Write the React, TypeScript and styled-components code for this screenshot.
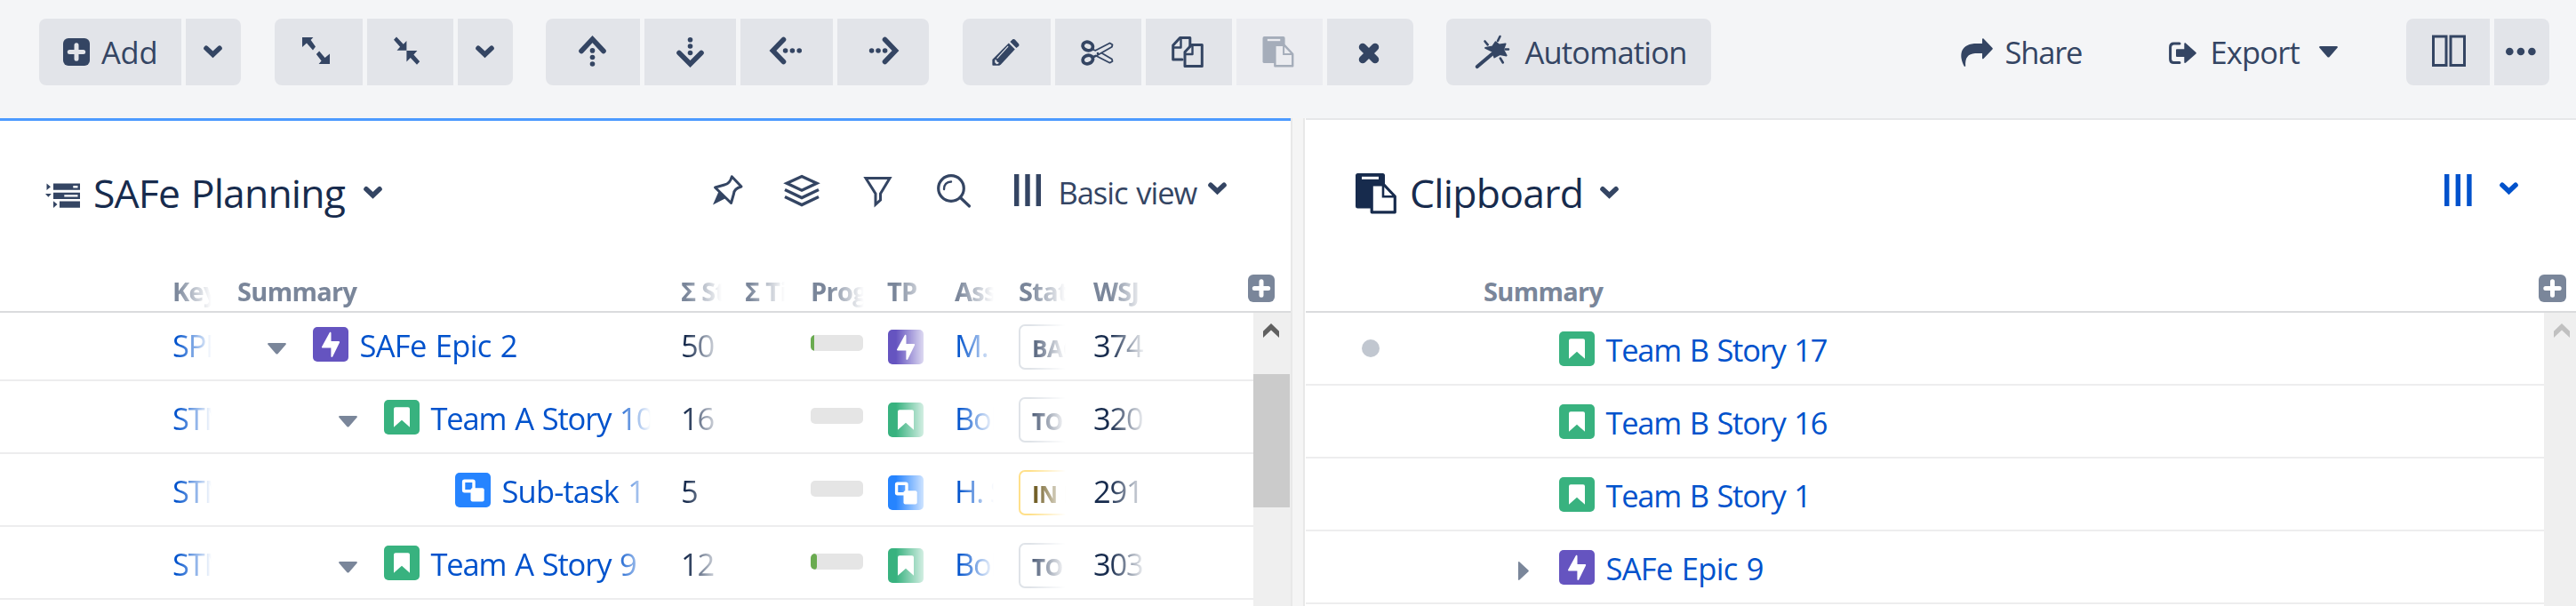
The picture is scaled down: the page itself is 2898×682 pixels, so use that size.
import React from 'react';
import styled, { createGlobalStyle, css } from 'styled-components';

const navy = '#344563';
const ink = '#172b4d';
const link = '#0052cc';
const muted = '#7a869a';

const GlobalStyle = createGlobalStyle`
  * { box-sizing: border-box; }
  body {
    margin: 0;
    background: #f4f5f7;
    font-family: "Open Sans", "Noto Sans", sans-serif;
    font-size: 34.5px;
    color: ${ink};
  }
`;

/* ---------- layout ---------- */

const Page = styled.div`
  display: flex;
  flex-direction: column;
  width: 2898px;
  height: 682px;
  overflow: hidden;
`;

const Toolbar = styled.header`
  display: flex;
  flex: none;
  height: 133px;
  padding: 21px 30px 0 44px;
  color: ${navy};
`;

const Group = styled.div<{ $after?: number }>`
  display: flex;
  gap: 5px;
  height: 75px;
  margin-right: ${p => p.$after ?? 38}px;
  border-radius: 8px;
  overflow: hidden;
`;

const Spacer = styled.div`
  flex: 1;
`;

const Button = styled.button<{ $w: number; $pad?: number; $plain?: boolean }>`
  display: flex;
  align-items: center;
  flex: none;
  width: ${p => p.$w}px;
  height: 75px;
  padding: 0 0 0 ${p => p.$pad ?? 0}px;
  border: 0;
  background: ${p => (p.$plain ? 'transparent' : '#e2e4e9')};
  color: inherit;
  font: inherit;
  &:disabled {
    background: #ebecf0;
    color: #a5adba;
  }
`;

const Label = styled.span<{ $track?: number; $left?: number; $w?: number }>`
  flex: none;
  margin-left: ${p => p.$left ?? 13}px;
  ${p => p.$w && css`width: ${p.$w}px;`}
  letter-spacing: ${p => p.$track ?? -1.05}px;
  word-spacing: 2px;
  line-height: 46px;
  text-align: left;
  white-space: pre;
`;

const ToolItem = styled.span<{ $left: number }>`
  display: flex;
  flex: none;
  margin-left: ${p => p.$left}px;
`;

const Panels = styled.main`
  display: flex;
  flex: 1;
  min-height: 0;
`;

const Panel = styled.section<{ $active?: boolean }>`
  display: flex;
  flex-direction: column;
  flex: none;
  width: ${p => (p.$active ? 1452 : 1429)}px;
  background: #fff;
  border-top: ${p => (p.$active ? '3px solid #4c9aff' : '2px solid #e6e7e9')};
  padding-top: ${p => (p.$active ? 0 : 1)}px;
`;

const Divider = styled.div`
  flex: none;
  width: 17px;
  background: #f5f5f5;
  border-left: 2px solid #e8e8e8;
  border-right: 1px solid #fff;
  box-shadow: inset -2px 0 0 #e8e8e8;
`;

const PanelHead = styled.div`
  display: flex;
  align-items: center;
  flex: none;
  height: 161px;
  padding-left: 51px;
  color: ${navy};
`;

const Title = styled.h1<{ $w: number; $track: number; $left: number }>`
  flex: none;
  width: ${p => p.$w}px;
  margin: 0 0 0 ${p => p.$left}px;
  color: ${ink};
  font-size: 44.5px;
  font-weight: 400;
  line-height: 60px;
  letter-spacing: ${p => p.$track}px;
  word-spacing: 2px;
  white-space: nowrap;
`;

const Tools = styled.div<{ $right: number; $accent?: boolean }>`
  display: flex;
  align-items: center;
  margin-left: auto;
  margin-right: ${p => p.$right}px;
  color: ${p => (p.$accent ? link : navy)};
`;

const columns = css`
  display: grid;
  grid-template-columns: 73px 499px 72px 74px 86px 76px 72px 84px 1fr;
  padding-left: 194px;
`;

const HeadRow = styled.div<{ $grid?: boolean }>`
  flex: none;
  height: 55px;
  padding-top: 8px;
  border-bottom: 2px solid #dadbdd;
  color: ${muted};
  font-size: 29px;
  font-weight: 700;
  letter-spacing: -0.7px;
  line-height: 45px;
  ${p => (p.$grid ? columns : css`display: flex; padding-left: 200px;`)}
`;

const LastHead = styled.div`
  display: flex;
  flex: 1;
  justify-content: space-between;
`;

const AddColumn = styled.span<{ $right: number }>`
  display: flex;
  height: 31px;
  margin: 4px ${p => p.$right}px 0 0;
`;

const Body = styled.div`
  display: flex;
  flex: 1;
  min-height: 0;
`;

const Rows = styled.div<{ $scrolled?: boolean }>`
  flex: 1;
  overflow: hidden;
  > :first-child {
    margin-top: ${p => (p.$scrolled ? -5 : 0)}px;
  }
`;

const rowBox = css`
  height: 82px;
  border-bottom: 2px solid #ededee;
`;

const GridRow = styled.div`
  ${rowBox}
  ${columns}
`;

const ClipRow = styled.div`
  ${rowBox}
  display: flex;
`;

const Cell = styled.div<{ $w: number; $top?: number; $link?: boolean }>`
  width: ${p => p.$w}px;
  padding-top: ${p => p.$top ?? 0}px;
  overflow: hidden;
  white-space: nowrap;
  color: ${p => (p.$link ? link : 'inherit')};
  mask-image: linear-gradient(to right, #000 calc(100% - 42px), transparent calc(100% - 2px));
`;

const Value = styled.span`
  display: block;
  letter-spacing: -1.2px;
  line-height: 83px;
`;

const Meter = styled.div`
  width: 59px;
  height: 18px;
  margin-top: 30px;
  border-radius: 5px;
  background: #e5e5e5;
  overflow: hidden;
`;

const MeterFill = styled.div<{ $w: number }>`
  width: ${p => p.$w}px;
  height: 100%;
  border-radius: ${p => (p.$w > 5 ? 4 : 0)}px;
  background: #6aab50;
`;

const Status = styled.div<{ $active?: boolean }>`
  width: 200px;
  height: 51px;
  padding-left: 13px;
  border: 2px solid ${p => (p.$active ? '#ffe08a' : '#dfe3e8')};
  border-radius: 7px;
  color: ${p => (p.$active ? '#594300' : '#42526e')};
  font-size: 26px;
  font-weight: 700;
  letter-spacing: -0.5px;
  line-height: 50px;
`;

const Issue = styled.div<{ $indent: number }>`
  display: flex;
  align-items: flex-start;
  margin-left: ${p => p.$indent}px;
  color: ${link};
`;

const ToggleSlot = styled.span<{ $top: number }>`
  display: flex;
  justify-content: center;
  width: 21px;
  margin: ${p => p.$top}px 30px 0 0;
  color: ${muted};
`;

const IconSlot = styled.span`
  display: flex;
  margin-top: 21px;
`;

const IssueText = styled.a<{ $track: number }>`
  margin-left: 12.5px;
  line-height: 83px;
  letter-spacing: ${p => p.$track}px;
  word-spacing: 2px;
  white-space: nowrap;
`;

const TypeSlot = styled.span`
  display: flex;
  padding-left: 1px;
`;

const ClipSlot = styled.span`
  display: flex;
  margin: 3px 0 0 5px;
  color: ${ink};
`;

const DotSlot = styled.span`
  width: 234px;
  padding: 30px 0 0 62.5px;
`;

const Dot = styled.span`
  display: block;
  width: 20px;
  height: 20px;
  border-radius: 50%;
  background: #c1c7d0;
`;

const Scrollbar = styled.div<{ $w: number; $dim?: boolean }>`
  flex: none;
  display: flex;
  flex-direction: column;
  width: ${p => p.$w}px;
  padding: 12px 0 0 11px;
  background: #efefef;
  color: ${p => (p.$dim ? '#c0c0c0' : '#606060')};
`;

const Thumb = styled.div`
  width: 41px;
  height: 150px;
  margin: 41px 0 0 -11px;
  background: #cbcbcb;
`;

/* ---------- icons ---------- */

const Svg = styled.svg`
  display: block;
  flex: none;
  overflow: visible;
`;

const Icon = ({ w, h = 45, children }: { w: number; h?: number; children: React.ReactNode }) => (
  <Svg width={w} height={h} viewBox={`0 0 ${w} ${h}`} fill="currentColor" strokeLinecap="round">
    {children}
  </Svg>
);

const Chevron = ({ y, h = 45 }: { y: number; h?: number }) => (
  <Icon w={21} h={h}>
    <path d={`M3 ${y + 2.8}l7.5 7 7.5-7`} fill="none" stroke="currentColor" strokeWidth="5.6" strokeLinejoin="miter" />
  </Icon>
);

const Plus = ({ cross, w = 31 }: { cross: string; w?: number }) => (
  <Svg width={w} height="31" viewBox={`0 0 ${w} 31`} fill="none">
    <rect width={w} height="31" rx="6" fill="currentColor" />
    <path d={`M${w / 2} 7.8v15.4M${w / 2 - 7.7} 15.5h15.4`} stroke={cross} strokeWidth="5" strokeLinecap="round" />
  </Svg>
);

const Expand = () => (
  <Icon w={31}>
    <path d="M0 6h12.4L9.600 9l5.400 7.500-3 4L5 12.500 0 17z" />
    <path d="M31 36H18.600l3-3.500-5.800-7.500 3.400-3.500 6.300 7.500L31 24.500z" />
  </Icon>
);

const Collapse = () => (
  <Icon w={30}>
    <path d="M14.400 20.700H3.500l3.600-4L0 8.800l3-3.200 7.800 8.200L14.400 10z" />
    <path d="M14.400 21h12l-4 4.600 6.800 7.600-3.200 3.600-7.200-7.800-4.400 4.500z" />
  </Icon>
);

const Up = () => (
  <Icon w={31}>
    <path d="M3 21.5L15.5 8 28 21.5" fill="none" stroke="currentColor" strokeWidth="5.6" />
    <circle cx="15.5" cy="20.9" r="2.8" /><circle cx="15.5" cy="28.5" r="2.8" /><circle cx="15.5" cy="36" r="2.8" />
  </Icon>
);

const Down = () => (
  <Icon w={31}>
    <path d="M3 23.5L15.5 36 28 23.5" fill="none" stroke="currentColor" strokeWidth="5.6" />
    <circle cx="15.5" cy="8.7" r="2.8" /><circle cx="15.5" cy="16" r="2.8" /><circle cx="15.5" cy="23.5" r="2.8" />
  </Icon>
);

const Left = () => (
  <Icon w={36}>
    <path d="M15.5 8.5L3.4 21l12.1 12.5" fill="none" stroke="currentColor" strokeWidth="5.6" />
    <circle cx="17.6" cy="21" r="2.8" /><circle cx="25.4" cy="21" r="2.8" /><circle cx="33.2" cy="21" r="2.8" />
  </Icon>
);

const Right = () => (
  <Icon w={34}>
    <path d="M17.5 8.5L29.5 21 17.5 33.5" fill="none" stroke="currentColor" strokeWidth="5.6" />
    <circle cx="2.6" cy="21" r="2.8" /><circle cx="10" cy="21" r="2.8" /><circle cx="17.6" cy="21" r="2.8" />
  </Icon>
);

const Pencil = () => (
  <Icon w={31}>
    <path d="M18.8 12.6l7 7-16 17.2-1.600.9H.8L.4 37V31z" />
    <path d="M20.4 11L23 8.6c1-.8 2-.6 2.8 0l4 4.400c.9 1 .9 2 .2 3L27.4 18z" />
    <path d="M17.8 16.4L6 29.4" stroke="#e2e4e9" strokeWidth="1.2" />
    <path d="M3.400 31l1.600.4.6 2 2 .8-.2 1.400-2.200.6-2-2z" fill="#e2e4e9" />
  </Icon>
);

const Scissors = () => (
  <Icon w={37}>
    <g fill="none" stroke="currentColor">
      <ellipse cx="7.8" cy="16" rx="5.8" ry="4.6" strokeWidth="3.8" transform="rotate(22 7.8 16)" />
      <ellipse cx="7.8" cy="31" rx="5.8" ry="4.6" strokeWidth="3.8" transform="rotate(-22 7.8 31)" />
      <path d="M14 20l2.500.8L32.500 12.500l3 1.700-.6 2.500L14.500 28.500" strokeWidth="1.8" strokeLinejoin="round" />
      <path d="M14 27.500l2.500-1 16 8.200 3-1.700-.6-2.500-11-6.500" strokeWidth="1.8" strokeLinejoin="round" />
    </g>
    <circle cx="19" cy="24" r="1.3" />
  </Icon>
);

const Copy = () => (
  <Icon w={36}>
    <g fill="none" stroke="currentColor" strokeWidth="3" strokeLinejoin="round">
      <path d="M12 31H1.700V15L9.500 6.500h11.300V16" />
      <path d="M3 17.500h7.500V8" strokeWidth="2.4" />
      <path d="M15 22.500l7.500-8h11.800V38.500H15z" />
      <path d="M16 25h7.500V16" strokeWidth="2.4" />
    </g>
  </Icon>
);

const Paste = ({ w, h, paper }: { w: number; h: number; paper: string }) => (
  <Svg width={w} height={h} viewBox="0 0 46 46">
    <rect width="33" height="39.5" rx="2.5" fill="currentColor" />
    <rect x="7" y="3.8" width="19" height="3" fill={paper} />
    <path d="M18.200 13H32l12.300 13v17.800H18.200z" fill={paper} stroke="currentColor" strokeWidth="3.2" strokeLinejoin="round" />
    <path d="M31 13v13.200h14" fill="none" stroke="currentColor" strokeWidth="2.6" />
  </Svg>
);

const Cross = () => (
  <Icon w={24}>
    <path d="M5 17l14 14M19 17L5 31" stroke="currentColor" strokeWidth="8.5" />
  </Icon>
);

const Wand = () => (
  <Icon w={38}>
    <path d="M1.800 39L19 24.500" stroke="currentColor" strokeWidth="4.2" />
    <path d="M22.500 11.300l4 3.200 7.200-1.200-2.500 6.500 3.500 6.700-7.500-1.300-6 3.300-2-6.500L11 18l8-1.600z" stroke="currentColor" strokeWidth="1.8" strokeLinejoin="round" />
    <path d="M25 10l2.500-5M10.500 10.500l3.200 3.800M33.500 19.500h3.500M27.800 29.500l3 5" stroke="currentColor" strokeWidth="2.6" />
  </Icon>
);

const ShareIcon = () => (
  <Icon w={36}>
    <path d="M4 39C-2.500 27-1 14.500 15 13h9V8.200c0-1 .8-1.300 1.500-.6L35.500 18c.5.5.5 1 0 1.600L25.500 30c-.7.7-1.500.3-1.500-.6V24H16C8 24.500 4.500 29 5.200 38.500z" />
  </Icon>
);

const ExportIcon = () => (
  <Icon w={31}>
    <path d="M12 13H5.500Q1.600 13 1.600 17V30.500Q1.600 34.500 5.500 34.500H12" fill="none" stroke="currentColor" strokeWidth="3" />
    <path d="M9 19.300h8.300V13.500c0-1.400 1-1.600 1.800-.8L30.500 23c.5.5.5.9 0 1.400L19.100 34.600c-.8.8-1.800.6-1.800-.8V28H9q-1 0-1-1V20.300q0-1 1-1z" />
  </Icon>
);

const CaretDown = () => (
  <Svg width="21" height="13" viewBox="0 0 21 13" fill="currentColor">
    <path d="M1.200 0H19.800c1 0 1.400 1 .8 1.700L11.700 12c-.7.8-1.700.8-2.400 0L.4 1.700C-.2 1 .2 0 1.200 0z" />
  </Svg>
);

const CaretRight = () => (
  <Svg width="12" height="21" viewBox="0 0 12 21" fill="currentColor">
    <path d="M0 1c0-1 .8-1.200 1.500-.5L11.500 9.800c.5.5.5.9 0 1.400L1.500 20.500C.8 21.200 0 21 0 20z" />
  </Svg>
);

const SplitIcon = () => (
  <Icon w={38}>
    <g fill="none" stroke="currentColor" strokeWidth="3">
      <path d="M1.500 5H16V37.500H1.500zM21 5H36.500V37.500H21z" strokeLinecap="butt" />
    </g>
  </Icon>
);

const More = () => (
  <Icon w={34}>
    <circle cx="4.3" cy="22" r="4.3" /><circle cx="16.9" cy="22" r="4.3" /><circle cx="29.4" cy="22" r="4.3" />
  </Icon>
);

const StructureIcon = () => (
  <Icon w={39} h={47}>
    <path fillRule="evenodd" d="M9 13.500h30v7.200H9zM31.300 16v2.400h5.200V16zM9 23.800h30V31H9zM21.300 26.200v2.400h15.200v-2.400zM16 33.500h23v7.200H16z" />
    <path d="M1.500 13.500l4.500 3.800-4.500 3.800zM0 25h6.800L3.400 28.800zM9 33.300l4.500 3.800L9 41z" />
  </Icon>
);

const Pin = () => (
  <Icon w={34} h={47}>
    <path d="M21.300 5.800L32 17c-5.500 1.500-8.300 4-8.500 8L20.500 35.500 2.500 18l10.500-3C18 14 20 10.500 21.300 5.800z" fill="none" stroke="currentColor" strokeWidth="3" strokeLinejoin="round" />
    <path d="M6.500 22.500L0 37.500 14.500 30z" />
  </Icon>
);

const Layers = () => (
  <Icon w={40} h={47}>
    <g fill="none" stroke="currentColor" strokeWidth="3.4" strokeLinecap="butt">
      <path d="M20 5.500L36.800 13.300 20 21.200 3.200 13.300z" />
      <path d="M1 20.500l19 9 19-9M1 28.500l19 9 19-9" />
    </g>
  </Icon>
);

const Filter = () => (
  <Icon w={31} h={47}>
    <path d="M2 7.500H29L18.500 25v7l-5.500 5V25z" fill="none" stroke="currentColor" strokeWidth="3" strokeLinejoin="miter" />
  </Icon>
);

const Search = () => (
  <Icon w={38} h={47}>
    <g fill="none" stroke="currentColor" strokeWidth="3.2">
      <circle cx="16" cy="19" r="14.3" />
      <path d="M8 20c-.3-5 3-8.500 8-8.500" strokeWidth="2.4" />
      <path d="M26.500 29.500l10 9.500" />
    </g>
  </Icon>
);

const Bars = ({ step = 12.3 }: { step?: number }) => (
  <Icon w={31} h={47}>
    <rect x="0" y="3" width="5.4" height="36" /><rect x={step} y="3" width="5.4" height="36" /><rect x={step * 2} y="3" width="5.4" height="36" />
  </Icon>
);

type Kind = 'epic' | 'story' | 'subtask';

const IssueIcon = ({ kind }: { kind: Kind }) => (
  <Svg width="40" height="39" viewBox="0 0 40 39">
    <rect width="40" height="39" rx="5" fill={{ epic: '#6554c0', story: '#38b27f', subtask: '#2684ff' }[kind]} />
    {kind === 'epic' && (
      <path d="M18.800 6.200c.8-.8 1.700-.3 1.700.7V16h8.500c1 0 1.400.8 1 1.600L22.300 33.300c-.7 1-1.900.7-1.900-.4V23.500H11c-1 0-1.300-.8-.8-1.600z" fill="#fff" />
    )}
    {kind === 'story' && (
      <path d="M13 8.300H27Q29 8.300 29 10.300V30.800L20 22.800 11 30.800V10.300Q11 8.300 13 8.300z" fill="#fff" />
    )}
    {kind === 'subtask' && (
      <>
        <rect x="9.6" y="9.3" width="11.4" height="11.4" rx="1" fill="none" stroke="#fff" strokeWidth="3.4" />
        <rect x="17.5" y="17.3" width="15.2" height="15.2" rx="2" fill="#fff" />
      </>
    )}
  </Svg>
);

const ScrollUp = () => (
  <Svg width="18" height="16" viewBox="0 0 18 16" fill="currentColor">
    <path d="M9 0l9 8.800V16L9 7.500 0 16V8.800z" />
  </Svg>
);

/* ---------- data ---------- */

const planning: {
  key: string; level: number; kind: Kind; name: string; track: number; open: boolean;
  points: string; fill: number; who: string; status: string; score: string;
}[] = [
  { key: 'SPP', level: 0, kind: 'epic', name: 'SAFe Epic 2', track: -0.7, open: true, points: '50', fill: 4, who: 'M.', status: 'BACK', score: '374' },
  { key: 'STM', level: 1, kind: 'story', name: 'Team A Story 10', track: -1.15, open: true, points: '16', fill: 0, who: 'Bob', status: 'TO D', score: '320' },
  { key: 'STM', level: 2, kind: 'subtask', name: 'Sub-task 1', track: -0.85, open: false, points: '5', fill: 0, who: 'H. S', status: 'IN P', score: '291' },
  { key: 'STM', level: 1, kind: 'story', name: 'Team A Story 9', track: -1.15, open: true, points: '12', fill: 7, who: 'Bob', status: 'TO D', score: '303' },
];

const clipboard: { kind: Kind; name: string; track: number; folded?: boolean; dot?: boolean }[] = [
  { kind: 'story', name: 'Team B Story 17', track: -1.25, dot: true },
  { kind: 'story', name: 'Team B Story 16', track: -1.25 },
  { kind: 'story', name: 'Team B Story 1', track: -1.25 },
  { kind: 'epic', name: 'SAFe Epic 9', track: -0.7, folded: true },
];

export default function App() {
  return (
    <Page>
      <GlobalStyle />
      <Toolbar>
        <Group>
          <Button $w={160} $pad={27}><Plus w={30} cross="#e2e4e9" /><Label $track={-0.2}>Add</Label></Button>
          <Button $w={62} $pad={20}><Chevron y={15.5} /></Button>
        </Group>
        <Group $after={37}>
          <Button $w={99} $pad={31}><Expand /></Button>
          <Button $w={97} $pad={30}><Collapse /></Button>
          <Button $w={62} $pad={19.5}><Chevron y={15.5} /></Button>
        </Group>
        <Group>
          <Button $w={106} $pad={37}><Up /></Button>
          <Button $w={103} $pad={36}><Down /></Button>
          <Button $w={104} $pad={33}><Left /></Button>
          <Button $w={103} $pad={36}><Right /></Button>
        </Group>
        <Group $after={37}>
          <Button $w={99} $pad={33}><Pencil /></Button>
          <Button $w={97} $pad={29}><Scissors /></Button>
          <Button $w={97} $pad={29}><Copy /></Button>
          <Button $w={97} $pad={29} disabled><Paste w={36} h={35} paper="#ebecf0" /></Button>
          <Button $w={97} $pad={35}><Cross /></Button>
        </Group>
        <Group $after={0}>
          <Button $w={298} $pad={33}><Wand /><Label $left={17.5} $track={-0.8}>Automation</Label></Button>
        </Group>
        <Spacer />
        <Button $plain $w={234}><ShareIcon /><Label $left={13.5} $track={-1.2}>Share</Label></Button>
        <Button $plain $w={267}>
          <ExportIcon /><Label $left={15.5} $w={122} $track={-0.85}>Export</Label><CaretDown />
        </Button>
        <Group $after={0}>
          <Button $w={94} $pad={29}><SplitIcon /></Button>
          <Button $w={62} $pad={13}><More /></Button>
        </Group>
      </Toolbar>

      <Panels>
        <Panel $active>
          <PanelHead>
            <StructureIcon />
            <Title $left={15} $w={303.5} $track={-0.85}>SAFe Planning</Title>
            <Chevron y={17} h={47} />
            <Tools $right={72}>
              <Pin />
              <ToolItem $left={46}><Layers /></ToolItem>
              <ToolItem $left={50}><Filter /></ToolItem>
              <ToolItem $left={51}><Search /></ToolItem>
              <ToolItem $left={49}><Bars /></ToolItem>
              <Label $left={18.5} $w={168.5}>Basic view</Label>
              <Chevron y={12.5} h={47} />
            </Tools>
          </PanelHead>
          <HeadRow $grid>
            <Cell $w={46}>Key</Cell>
            <Cell $w={466}>Summary</Cell>
            <Cell $w={48}>Σ St</Cell>
            <Cell $w={47}>Σ Ti</Cell>
            <Cell $w={62}>Prog</Cell>
            <Cell $w={52}>TP</Cell>
            <Cell $w={46}>Ass</Cell>
            <Cell $w={55}>Stat</Cell>
            <LastHead>
              <Cell $w={60}>WSJ</Cell>
              <AddColumn $right={18}><Plus w={30} cross="#fff" /></AddColumn>
            </LastHead>
          </HeadRow>
          <Body>
            <Rows $scrolled>
              {planning.map((r, i) => (
                <GridRow key={i}>
                  <Cell $w={46} $link><Value>{r.key}</Value></Cell>
                  <Cell $w={467}>
                    <Issue $indent={34 + r.level * 80}>
                      <ToggleSlot $top={38.5}>{r.open && <CaretDown />}</ToggleSlot>
                      <IconSlot><IssueIcon kind={r.kind} /></IconSlot>
                      <IssueText $track={r.track}>{r.name}</IssueText>
                    </Issue>
                  </Cell>
                  <Cell $w={48}><Value>{r.points}</Value></Cell>
                  <span />
                  <Meter>{r.fill > 0 && <MeterFill $w={r.fill} />}</Meter>
                  <Cell $w={52} $top={24}><TypeSlot><IssueIcon kind={r.kind} /></TypeSlot></Cell>
                  <Cell $w={46} $link><Value>{r.who}</Value></Cell>
                  <Cell $w={55} $top={18}><Status $active={r.kind === 'subtask'}>{r.status}</Status></Cell>
                  <Cell $w={61}><Value>{r.score}</Value></Cell>
                </GridRow>
              ))}
            </Rows>
            <Scrollbar $w={42}><ScrollUp /><Thumb /></Scrollbar>
          </Body>
        </Panel>

        <Divider />

        <Panel>
          <PanelHead>
            <ClipSlot><Paste w={46} h={46} paper="#fff" /></ClipSlot>
            <Title $left={15} $w={214} $track={-0.75}>Clipboard</Title>
            <Chevron y={17} h={47} />
            <Tools $right={65} $accent>
              <Bars step={12.6} />
              <ToolItem $left={31}><Chevron y={12.5} h={47} /></ToolItem>
            </Tools>
          </PanelHead>
          <HeadRow>
            <LastHead>
              <span>Summary</span>
              <AddColumn $right={11}><Plus cross="#fff" /></AddColumn>
            </LastHead>
          </HeadRow>
          <Body>
            <Rows>
              {clipboard.map(r => (
                <ClipRow key={r.name}>
                  <DotSlot>{r.dot && <Dot />}</DotSlot>
                  <Issue $indent={0}>
                    <ToggleSlot $top={34}>{r.folded && <CaretRight />}</ToggleSlot>
                    <IconSlot><IssueIcon kind={r.kind} /></IconSlot>
                    <IssueText $track={r.track}>{r.name}</IssueText>
                  </Issue>
                </ClipRow>
              ))}
            </Rows>
            <Scrollbar $w={36} $dim><ScrollUp /></Scrollbar>
          </Body>
        </Panel>
      </Panels>
    </Page>
  );
}
